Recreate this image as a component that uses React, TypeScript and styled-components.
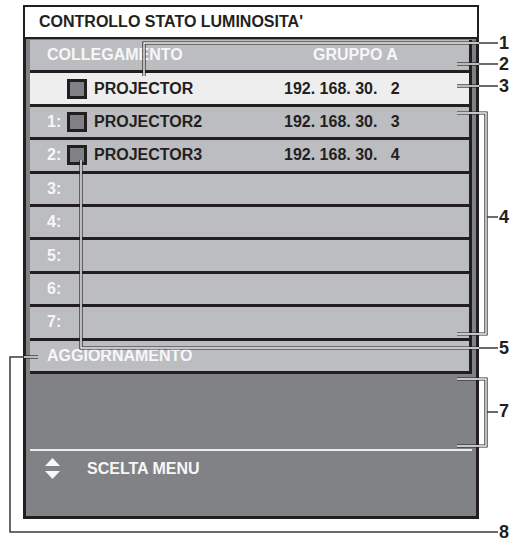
import React from 'react';
import styled, { createGlobalStyle } from 'styled-components';

const GlobalStyle = createGlobalStyle`
  html, body {
    margin: 0;
    padding: 0;
    background: #ffffff;
  }
  body {
    font-family: "Liberation Sans", Arial, sans-serif;
    width: 512px;
    height: 543px;
    overflow: hidden;
  }
`;

const INK = '#231f20';

const Page = styled.div`
  position: relative;
  width: 512px;
  height: 543px;
  box-sizing: border-box;
  padding: 5px 0 0 23px;
`;

const Screen = styled.div`
  width: 456px;
  display: flex;
  flex-direction: column;
`;

const TitleBar = styled.div`
  height: 34px;
  box-sizing: border-box;
  border: 2px solid ${INK};
  background: #ffffff;
  display: flex;
  align-items: center;
  padding-left: 14px;
  font-size: 16px;
  font-weight: bold;
  color: ${INK};
`;

const Body = styled.div`
  height: 480px;
  box-sizing: border-box;
  border: 3px solid ${INK};
  border-top: none;
  background: #818285;
  padding: 1px 4px 0 4px;
  display: flex;
  flex-direction: column;
`;

const Row = styled.div<{ $selected?: boolean }>`
  height: 33.4px;
  flex: none;
  box-sizing: border-box;
  border-bottom: 3px solid ${INK};
  border-right: 3px solid ${INK};
  background: ${(p) => (p.$selected ? '#eeeeef' : '#bcbdc0')};
  display: flex;
  align-items: center;
  padding-left: 17px;
  font-size: 16px;
  font-weight: bold;
  color: ${INK};
`;

const HeadCell = styled.span<{ $width?: number }>`
  color: #f7f7f7;
  width: ${(p) => (p.$width ? `${p.$width}px` : 'auto')};
`;

const Index = styled.span`
  width: 20px;
  color: #f7f7f7;
`;

const Swatch = styled.span`
  width: 20px;
  height: 20px;
  box-sizing: border-box;
  border: 3px solid ${INK};
  background: #808184;
  margin-right: 7px;
`;

const Name = styled.span`
  width: 190px;
`;

const Address = styled.span`
  white-space: pre;
`;

const Lower = styled.div`
  flex: 1;
  display: flex;
  flex-direction: column;
`;

const Divider = styled.div`
  height: 2px;
  background: #ececec;
  margin-top: 75px;
`;

const Footer = styled.div`
  height: 36px;
  display: flex;
  align-items: center;
  padding-left: 15px;
  gap: 27px;
  font-size: 16px;
  font-weight: bold;
  color: #f7f7f7;
`;

const Overlay = styled.svg`
  position: absolute;
  left: 0;
  top: 0;
  pointer-events: none;
`;

const Label = styled.span<{ $y: number }>`
  position: absolute;
  left: 499px;
  top: ${(p) => p.$y - 11}px;
  font-size: 18px;
  font-weight: bold;
  line-height: 22px;
  color: ${INK};
`;

const devices = [
  { idx: '', name: 'PROJECTOR', ip: '192. 168. 30.   2', selected: true },
  { idx: '1:', name: 'PROJECTOR2', ip: '192. 168. 30.   3' },
  { idx: '2:', name: 'PROJECTOR3', ip: '192. 168. 30.   4' },
  { idx: '3:' },
  { idx: '4:' },
  { idx: '5:' },
  { idx: '6:' },
  { idx: '7:' },
];

// callouts that sit on the panel: white core with a dark rim
const innerPaths = [
  'M144,76 V43 H479',
  'M457,64 H479',
  'M457,86 H479',
  'M457,113 H486 V334 H457',
  'M81,160 V348 H479',
  'M457,379 H486 V446 H457',
  'M38,357 H24',
];

// leader lines on the white page
const outerPaths = [
  'M479,43 H498',
  'M479,64 H498',
  'M479,86 H498',
  'M487,217 H498',
  'M479,348 H498',
  'M487,412 H498',
  'M24,357 H10 V532 H498',
];

const labels = [
  { n: '1', y: 43 },
  { n: '2', y: 64 },
  { n: '3', y: 86 },
  { n: '4', y: 217 },
  { n: '5', y: 348 },
  { n: '7', y: 411 },
  { n: '8', y: 532 },
];

const UpDown = () => (
  <svg width="15" height="21" viewBox="0 0 15 21">
    <polygon points="7.5,0 15,8 0,8" fill="#f7f7f7" />
    <polygon points="0,13 15,13 7.5,21" fill="#f7f7f7" />
  </svg>
);

const App: React.FC = () => {
  return (
    <Page>
      <GlobalStyle />
      <Screen>
        <TitleBar>CONTROLLO STATO LUMINOSITA'</TitleBar>
        <Body>
          <Row>
            <HeadCell $width={266}>COLLEGAMENTO</HeadCell>
            <HeadCell>GRUPPO A</HeadCell>
          </Row>
          {devices.map((d, i) => (
            <Row key={i} $selected={d.selected}>
              <Index>{d.idx}</Index>
              {d.name && (
                <>
                  <Swatch />
                  <Name>{d.name}</Name>
                  <Address>{d.ip}</Address>
                </>
              )}
            </Row>
          ))}
          <Row>
            <HeadCell>AGGIORNAMENTO</HeadCell>
          </Row>
          <Lower>
            <Divider />
            <Footer>
              <UpDown />
              <span>SCELTA MENU</span>
            </Footer>
          </Lower>
        </Body>
      </Screen>

      <Overlay width="512" height="543" viewBox="0 0 512 543">
        {innerPaths.map((d) => (
          <path key={d} d={d} fill="none" stroke={INK} strokeWidth={3.2} />
        ))}
        {innerPaths.map((d) => (
          <path key={d + 'w'} d={d} fill="none" stroke="#ffffff" strokeWidth={1.4} />
        ))}
        {outerPaths.map((d) => (
          <path key={d} d={d} fill="none" stroke="#3a3a3a" strokeWidth={1.5} />
        ))}
      </Overlay>
      {labels.map((l) => (
        <Label key={l.n} $y={l.y}>
          {l.n}
        </Label>
      ))}
    </Page>
  );
};

export default App;
